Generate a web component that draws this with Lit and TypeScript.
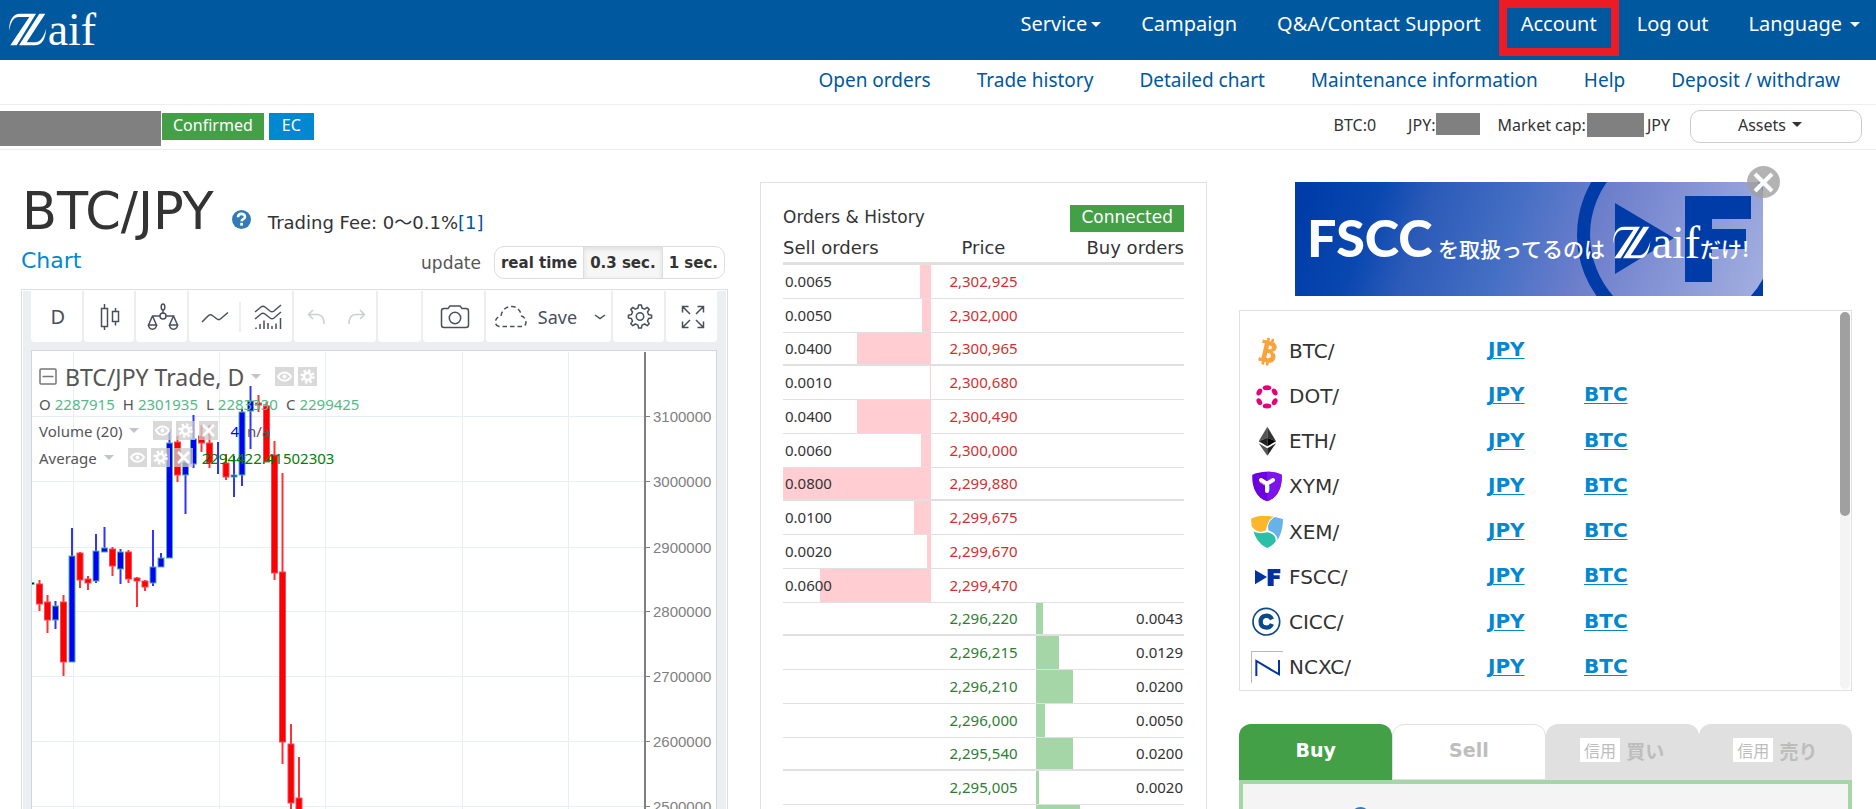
import { LitElement, html, svg, css } from "lit";
import { customElement } from "lit/decorators.js";
import { classMap } from "lit/directives/class-map.js";
import { styleMap } from "lit/directives/style-map.js";

const zMark = svg`
  <path d="M27 92C27 60 38 40 60 40H108L50 135H31L88 50H56C42 50 33 62 27 92Z" />
  <path d="M118 40H136L80 126H105C122 126 132 108 139 84C136 115 128 135 105 135H57Z" />
  <text x="143" y="134" font-size="138" font-family="Liberation Serif, serif">aif</text>`;

const caret = html`<svg class="caret" width="10" height="5" viewBox="0 0 10 5" aria-hidden="true"><path d="M0 0H10L5 5Z" /></svg>`;

const help = html`<svg class="help" width="19" height="19" viewBox="0 0 19 19" aria-hidden="true">
  <circle cx="9.5" cy="9.5" r="9.5" fill="#337ab7" />
  <path d="M6 7.2C6 2.8 13 2.8 13 6.9C13 9.3 9.6 9 9.6 11.3" fill="none" stroke="#fff" stroke-width="2.6" />
  <rect x="8.2" y="12.8" width="2.8" height="2.8" fill="#fff" />
</svg>`;

/* ---------- Price chart ---------- */

type Candle = [x: number, up: boolean, high: number, top: number, bottom: number, low: number];
const candles: Candle[] = [
  [39.5, false, 580, 584, 604, 611], [47.5, false, 595, 602, 620, 633], [55.5, true, 601, 606, 620, 629],
  [63.5, false, 595, 602, 662, 676], [72, true, 528, 556, 662, 662], [80, false, 552, 553, 580, 588],
  [88, false, 576, 579, 583, 590], [96, true, 534, 551, 581, 583], [104.5, true, 527, 548, 552, 552],
  [112.5, false, 547, 549, 566, 576], [120.5, true, 549, 552, 569, 584], [128.5, false, 550, 552, 579, 583],
  [137, false, 577, 578, 581, 607], [145, false, 580, 581, 587, 591], [153, true, 530, 567, 583, 586],
  [161, true, 553, 558, 567, 567], [169.5, true, 429, 443, 558, 558], [177.5, false, 436, 442, 475, 482],
  [185.5, true, 459, 462, 475, 514], [193.5, true, 415, 439, 464, 468], [201.5, false, 425, 436, 443, 452],
  [209.5, false, 425, 443, 463, 468], [218, true, 442, 458, 458, 474], [226, false, 454, 463, 477, 480],
  [234, true, 456, 475, 477, 497], [242, true, 409, 412, 475, 486], [250.5, true, 386, 401, 411, 449],
  [258.5, false, 395, 403, 405, 412], [266.5, false, 402, 406, 462, 462], [274.5, false, 441, 455, 573, 580],
  [282.5, false, 473, 572, 742, 764], [291, false, 724, 744, 803, 830], [299, false, 757, 798, 850, 850],
];
const levels = [
  [416, "3100000"], [481, "3000000"], [547, "2900000"], [611, "2800000"],
  [676, "2700000"], [741, "2600000"], [806, "2500000"],
] as const;

/* ---------- Order book ---------- */

const asks: [string, string, number][] = [
  ["0.0065", "2,302,925", 8], ["0.0050", "2,302,000", 6], ["0.0400", "2,300,965", 50], ["0.0010", "2,300,680", 1],
  ["0.0400", "2,300,490", 50], ["0.0060", "2,300,000", 7], ["0.0800", "2,299,880", 100], ["0.0100", "2,299,675", 12],
  ["0.0020", "2,299,670", 3], ["0.0600", "2,299,470", 75],
];
const bids: [string, string, number][] = [
  ["0.0043", "2,296,220", 5], ["0.0129", "2,296,215", 16], ["0.0200", "2,296,210", 25], ["0.0050", "2,296,000", 6],
  ["0.0200", "2,295,540", 25], ["0.0020", "2,295,005", 2], ["0.0245", "2,295,000", 30],
];

/* ---------- Coin icons, each on a 96-unit square ---------- */

const coins: Record<string, unknown> = {
  BTC: svg`<g transform="rotate(13 50 50)"><path d="M28 18H56C76 18 80 42 64 47C84 52 80 82 57 82H28V72H36V28H28ZM50 31V42H54C62 42 62 31 54 31ZM50 54V69H55C65 69 65 54 55 54Z" fill="#f9a33c" fill-rule="evenodd"/><path d="M44 9V20M57 9V20M44 80V91M57 80V91" stroke="#f9a33c" stroke-width="8"/></g>`,
  DOT: svg`<g fill="#e6007a"><ellipse cx="48" cy="23" rx="13" ry="7.5"/><ellipse cx="48" cy="78" rx="13" ry="7.5"/><ellipse cx="25" cy="36" rx="11" ry="7.5" transform="rotate(-60 25 36)"/><ellipse cx="25" cy="65" rx="11" ry="7.5" transform="rotate(60 25 65)"/><ellipse cx="71" cy="36" rx="11" ry="7.5" transform="rotate(60 71 36)"/><ellipse cx="71" cy="65" rx="11" ry="7.5" transform="rotate(-60 71 65)"/></g>`,
  ETH: svg`<path d="M49 5L23 49L49 38Z" fill="#555"/><path d="M49 5L75 49L49 38Z" fill="#333"/><path d="M23 49L49 38V64Z" fill="#222"/><path d="M75 49L49 38V64Z" fill="#000"/><path d="M23 55L49 70V92Z" fill="#555"/><path d="M75 55L49 70V92Z" fill="#222"/>`,
  XYM: svg`<path d="M48 5C64 5 82 9 92 14C94 45 84 82 48 94C12 82 2 45 4 14C14 9 32 5 48 5Z" fill="#6d00e0"/><path d="M48 5C64 5 82 9 92 14C94 45 84 82 48 94Z" fill="#7d14ea"/><path d="M30 30L48 41L66 30M48 40V63" stroke="#fff" stroke-width="12" stroke-linecap="round" fill="none"/><path d="M26 36L42 46" stroke="#f0b040" stroke-width="3"/><path d="M55 47V62" stroke="#20c0c0" stroke-width="3"/>`,
  XEM: svg`<path d="M0 8C18 -2 44 -2 68 2C50 12 50 28 44 43C28 54 8 42 2 30Z" fill="#fbb62c"/><path d="M72 3C84 6 92 8 96 10C96 32 90 56 80 72C78 52 60 48 52 42C48 26 58 10 72 3Z" fill="#67b2e8"/><path d="M8 46C22 54 38 52 50 49C66 52 76 62 74 76C68 86 58 92 49 96C28 88 12 66 8 46Z" fill="#2cbfa7"/>`,
  FSCC: svg`<g fill="#0033a0"><path d="M12 27L48 48L12 70Z"/><path d="M50 24H88V37H68V43H86V54H68V75H50Z"/></g>`,
  CICC: svg`<circle cx="46" cy="47" r="40" fill="none" stroke="#0b4a8a" stroke-width="5"/><path d="M63 40C56 24 29 26 29 47C29 68 56 70 63 54" fill="none" stroke="#0b4a8a" stroke-width="13"/>`,
  NCXC: svg`<path d="M1 96V1H96" fill="none" stroke="#aaa" stroke-width="3"/><path d="M16 75V30L84 70V27" fill="none" stroke="#0033a0" stroke-width="6"/>`,
};

const gearPath = svg`<path d="M11.6 2H14.4L15 5L17.6 6.1L20.2 4.4L22.2 6.4L20.5 9L21.6 11.6L24.6 12.2V14.9L21.6 15.5L20.5 18.1L22.2 20.7L20.2 22.7L17.6 21L15 22.1L14.4 25H11.6L11 22.1L8.4 21L5.8 22.7L3.8 20.7L5.5 18.1L4.4 15.5L1.4 14.9V12.2L4.4 11.6L5.5 9L3.8 6.4L5.8 4.4L8.4 6.1L11 5Z" stroke-linejoin="round"/>`;

const icon = (w: number, h: number, body: unknown) =>
  html`<svg class="line-icon" width=${w} height=${h} viewBox="0 0 ${w} ${h}" aria-hidden="true">${body}</svg>`;

const eyeTool = html`<button class="mini" aria-label="Hide"><svg width="15" height="13" viewBox="0 0 15 13"><path d="M1 6.5C4 1 11 1 14 6.5C11 12 4 12 1 6.5Z" fill="none" stroke="#fff" stroke-width="2"/><circle cx="7.5" cy="6.5" r="2" fill="#fff"/></svg></button>`;
const gearTool = html`<button class="mini" aria-label="Settings"><svg width="15" height="15" viewBox="0 0 15 15"><circle cx="7.5" cy="7.5" r="3.6" fill="none" stroke="#fff" stroke-width="2.6"/><circle cx="7.5" cy="7.5" r="6" fill="none" stroke="#fff" stroke-width="2.4" stroke-dasharray="2.4 2.3"/></svg></button>`;
const closeTool = html`<button class="mini" aria-label="Remove"><svg width="13" height="13" viewBox="0 0 13 13"><path d="M1 1L12 12M12 1L1 12" stroke="#fff" stroke-width="2.6"/></svg></button>`;

@customElement("price-chart")
export class PriceChart extends LitElement {
  static styles = css`
    :host { display: block; border: 1px solid #dcdee0; padding: 1px 1px 0; font-family: "Noto Sans", sans-serif; color: #4a4f5c; }
    button { font: inherit; color: inherit; border: 0; margin: 0; padding: 0; background: none; }
    .body { background: #ebeff2; padding: 0 9px 0 8px; }
    .toolbar { display: grid; grid-template-columns: 51fr 51fr 51fr 104fr 83fr 43fr 62fr 126fr 52fr 51fr; gap: 2px; height: 51px; }
    .cell { display: flex; align-items: center; justify-content: center; background: #fff; border-radius: 0 0 4px 4px; }
    .cell button { flex: 1; height: 100%; padding-left: 3px; display: flex; align-items: center; justify-content: center; gap: 10px; }
    .interval { font-size: 20px; }
    .save { font-size: 18px; }
    .save svg:last-child { margin-left: 7px; }
    .rule { width: 2px; height: 30px; background: #ebeff2; }
    .faded { color: #ccced2; }
    .line-icon { fill: none; stroke: currentColor; stroke-width: 1.5; display: block; }
    .pane { position: relative; margin-top: 8px; background: #fff; border: 1px solid #d3d6d9; overflow: hidden; }
    .plot { display: block; }
    .legend { position: absolute; inset: 12px auto auto 7px; }
    .line { display: flex; align-items: center; height: 27px; font-size: 15px; color: #555; white-space: nowrap; }
    .title { font-size: 23px; }
    .fold { width: 18px; height: 18px; margin-right: 8px; }
    .fold svg { display: block; }
    .drop { fill: #c4c4c4; margin: 0 14px 0 7px; }
    .mini { width: 19px; height: 19px; margin-right: 4px; background: rgba(204, 204, 204, 0.75); display: flex; align-items: center; justify-content: center; }
    .ohlc { margin-right: 8px; }
    .num { color: #53b987; margin-left: 4px; }
    .vol { color: #0000ff; margin: 0 8px; }
    .avg { color: #008000; margin-left: 5px; }
    .grid { stroke: #e6eff4; stroke-width: 1; }
    .axis { stroke: #808080; stroke-width: 2; }
    .tick { stroke: #808080; stroke-width: 1; }
    .label { fill: #808080; font: 15px "Liberation Sans", sans-serif; }
    .up { fill: #0000ff; stroke: #53b987; }
    .down { fill: #ff0000; stroke: #eb4d5c; }
    .wick-up { stroke: #3333ff; stroke-width: 2; }
    .wick-down { stroke: #ff3333; stroke-width: 2; }
  `;

  render() {
    const drop = html`<svg class="drop" width="10" height="5" viewBox="0 0 10 5"><path d="M0 0H10L5 5Z" /></svg>`;
    return html`<div class="body">
      <div class="toolbar" role="toolbar" aria-label="Chart tools">
        <div class="cell"><button class="interval">D</button></div>
        <div class="cell"><button aria-label="Candles">${icon(20, 28, svg`<rect x="1.5" y="5.5" width="6" height="18"/><path d="M4.5 1V5.5M4.5 23.5V27M15.5 5V8.5M15.5 18.5V22.5"/><rect x="12.5" y="8.5" width="6" height="10"/>`)}</button></div>
        <div class="cell"><button aria-label="Compare">${icon(32, 28, svg`<ellipse cx="16" cy="4" rx="1.8" ry="3"/><path d="M16 7V10.5M13 13H5.5L1.5 22H9.5L5.5 13M19 13H26.5L22.5 22H30.5L26.5 13"/><circle cx="16" cy="13" r="3"/><path d="M1.5 22C2 27.5 9 27.5 9.5 22M22.5 22C23 27.5 30 27.5 30.5 22"/>`)}</button></div>
        <div class="cell">
          <button aria-label="Line style">${icon(28, 12, svg`<path d="M1 11L7 5Q9 2.5 12 5L16 8Q18 9.5 20 7.5L27 1.5"/>`)}</button>
          <span class="rule"></span>
          <button aria-label="Indicators">${icon(28, 26, svg`<path d="M1 8L7 3Q9 1.5 11 3L16 7Q18 8.5 20 7L27 1M1 15L7 10Q9 8.5 11 10L16 14Q18 15.5 20 14L27 8"/><path d="M2 25V23.5M6 25V20M10 25V16.5M14 25V19M18 25V22M22 25V19.5M26.5 25V14"/>`)}</button>
        </div>
        <div class="cell faded">
          <button aria-label="Undo">${icon(18, 16, svg`<path d="M6 1L1.5 5.5L6 10M1.5 5.5H10Q17 5.5 17 15"/>`)}</button>
          <button aria-label="Redo">${icon(18, 16, svg`<path d="M12 1L16.5 5.5L12 10M16.5 5.5H8Q1 5.5 1 15"/>`)}</button>
        </div>
        <div class="cell"></div>
        <div class="cell"><button aria-label="Snapshot">${icon(30, 24, svg`<path d="M4 3.5H8L10 1H20L22 3.5H26Q28.5 3.5 28.5 6V20Q28.5 22.5 26 22.5H4Q1.5 22.5 1.5 20V6Q1.5 3.5 4 3.5Z"/><circle cx="15" cy="13" r="5.7"/>`)}</button></div>
        <div class="cell"><button class="save">${icon(34, 23, svg`<path stroke-dasharray="4.5 3" d="M5 21.5C0 21 0 12 7 11C8 4 13 1.5 18 1.5C24 1.5 27 7 27.5 11C32 12 34 20 29 21.5Z"/>`)}<span>Save</span>${icon(12, 6, svg`<path d="M1 1L6 4.5L11 1"/>`)}</button></div>
        <div class="cell"><button aria-label="Settings">${icon(27, 27, svg`${gearPath}<circle cx="13" cy="13.5" r="3.7"/>`)}</button></div>
        <div class="cell"><button aria-label="Full screen">${icon(24, 24, svg`<path d="M1.5 7.5V1.5H7.5M1.5 1.5L9 9M16.5 1.5H22.5V7.5M22.5 1.5L15 9M1.5 16.5V22.5H7.5M1.5 22.5L9 15M22.5 16.5V22.5H16.5M22.5 22.5L15 15"/>`)}</button></div>
      </div>
      <div class="pane">
        <svg class="plot" width="685" height="500" viewBox="32 351 685 500" role="img" aria-label="BTC/JPY daily candles">
          ${[73.5, 219.5, 325.5, 462.5, 568.5].map((x) => svg`<path class="grid" d="M${x} 352V851" />`)}
          ${levels.map(([y, t]) => svg`<path class="grid" d="M32 ${y + 0.5}H644" /><path class="tick" d="M645 ${y + 0.5}H650" /><text class="label" x="653" y=${y + 6}>${t}</text>`)}
          <rect class="up" x="30" y="582.5" width="4" height="2" />
          ${candles.map(([x, up, high, top, bottom, low]) => svg`
            <path class=${up ? "wick-up" : "wick-down"} d="M${x} ${high}V${low}" />
            <rect class=${up ? "up" : "down"} x=${x - 3} y=${top} width="6" height=${bottom - top} />`)}
          <path class="axis" d="M645 352V851" />
        </svg>
        <div class="legend">
          <div class="line title">
            <button class="fold" aria-label="Collapse legend"><svg width="18" height="17" viewBox="0 0 18 17"><rect x="1" y="1" width="16" height="15" rx="1" fill="none" stroke="#777" stroke-width="1.5" /><path d="M3.5 8.5H14.5" stroke="#777" stroke-width="1.5" /></svg></button>
            <span>BTC/JPY Trade, D</span>${drop}${eyeTool}${gearTool}
          </div>
          <div class="line">
            ${[["O", "2287915"], ["H", "2301935"], ["L", "2283330"], ["C", "2299425"]].map(([k, v]) => html`<span class="ohlc">${k}<span class="num">${v}</span></span>`)}
          </div>
          <div class="line"><span>Volume (20)</span>${drop}${eyeTool}${gearTool}${closeTool}<span class="vol">4</span><span>n/a</span></div>
          <div class="line"><span>Average</span>${drop}${eyeTool}${gearTool}${closeTool}<span class="avg">2294422.41502303</span></div>
        </div>
      </div>
    </div>`;
  }
}

@customElement("order-book")
export class OrderBook extends LitElement {
  static styles = css`
    :host { display: block; border: 1px solid #e0e0e0; padding: 22px 22px 0; font-family: "DejaVu Sans", sans-serif; font-size: 17px; color: #333; }
    .head { display: flex; justify-content: space-between; align-items: flex-start; line-height: 25px; }
    .badge { background: #43a047; color: #fff; padding: 0 11px; height: 27px; }
    table { width: 100%; table-layout: fixed; border-collapse: separate; border-spacing: 0; }
    .side { width: 37%; }
    th { font-weight: 400; height: 33px; padding: 2px 0 0; border-bottom: 3px solid #e0e0e0; font-size: 18px; line-height: 22px; box-sizing: border-box; }
    .left { text-align: left; }
    .right { text-align: right; }
    td { position: relative; height: 34px; padding: 0 2px 2px; box-sizing: border-box; border-bottom: 1px solid #e0e0e0; font: 15px/20px "Noto Sans", sans-serif; text-align: center; }
    tr:nth-child(4n + 3) td { height: 33px; border-bottom-width: 2px; }
    td.left { text-align: left; }
    td.right { text-align: right; padding-right: 1px; }
    .ask { color: #d32f2f; }
    .bid { color: #2e7d32; }
    .bar { position: absolute; top: 0; bottom: 0; }
    .ask-bar { right: 0; background: #ffcdd2; }
    .bid-bar { left: 0; background: #a5d6a7; }
    .amount { position: relative; }
  `;

  render() {
    return html`
      <div class="head"><span>Orders &amp; History</span><span class="badge">Connected</span></div>
      <table>
        <colgroup><col class="side" /><col /><col class="side" /></colgroup>
        <thead><tr><th class="left">Sell orders</th><th>Price</th><th class="right">Buy orders</th></tr></thead>
        <tbody>
          ${asks.map(([a, p, w]) => html`<tr>
            <td class="left"><span class="bar ask-bar" style=${styleMap({ width: `${w}%` })}></span><span class="amount">${a}</span></td>
            <td class="ask">${p}</td><td></td></tr>`)}
          ${bids.map(([a, p, w]) => html`<tr>
            <td></td><td class="bid">${p}</td>
            <td class="right"><span class="bar bid-bar" style=${styleMap({ width: `${w}%` })}></span><span class="amount">${a}</span></td></tr>`)}
        </tbody>
      </table>`;
  }
}

@customElement("app-root")
export class AppRoot extends LitElement {
  static styles = css`
    :host { display: block; height: 100vh; overflow: hidden; background: #fff; color: #333; font-family: "DejaVu Sans", "Noto Sans CJK JP", sans-serif; font-size: 17px; }
    a { text-decoration: none; color: #00589f; }
    button { font: inherit; color: inherit; margin: 0; padding: 0; border: 0; background: none; }
    .caret { fill: currentColor; }
    .top { display: flex; justify-content: space-between; background: #00589f; height: 60px; padding: 0 16px 0 8px; font: 20px/26px "Noto Sans", sans-serif; }
    .logo { fill: #fff; margin-top: 11px; overflow: visible; }
    .menu { display: flex; align-items: flex-start; }
    .menu a, .menu button { color: #fff; margin-left: 40px; padding-top: 11px; display: flex; align-items: center; gap: 4px; white-space: nowrap; }
    .menu .lang { gap: 8px; }
    .menu .marked { box-sizing: border-box; border: 8px solid #ed1c24; height: 56px; padding: 0 14px 8px; margin: 0 -22px 0 18px; }
    .sub { display: flex; justify-content: flex-end; gap: 46px; height: 44px; padding-right: 36px; border-bottom: 1px solid #eee; font: 19px/40px "Noto Sans", sans-serif; }
    .status { display: flex; align-items: flex-start; height: 44px; border-bottom: 1px solid #eee; font: 16px/24px "Noto Sans", sans-serif; padding-right: 14px; }
    .mask { background: #808080; }
    .user { width: 161px; height: 35px; margin: 6px 1px 0 0; }
    .tag { color: #fff; background: #43a047; height: 27px; margin: 8px 5px 0 0; padding: 0 11px; }
    .ec { background: #0288d1; padding: 0 13px; }
    .stats { margin-left: auto; display: flex; align-items: flex-start; gap: 18px; padding-top: 8px; }
    .stat { display: flex; }
    .stat:first-child { margin-right: 14px; }
    .balance { width: 44px; height: 22px; }
    .cap { width: 57px; height: 24px; margin: 0 3px 0 1px; }
    .assets { width: 172px; height: 33px; margin: 5px 0 0 20px; border: 1px solid #ccc; border-radius: 10px; display: flex; align-items: center; justify-content: center; gap: 6px; padding: 0 12px 4px 0; }
    .main { display: grid; grid-template-columns: minmax(0, 707fr) minmax(0, 447fr) minmax(0, 613fr); column-gap: 32px; padding: 32px 24px 0 21px; align-items: start; }
    .pair { display: flex; align-items: baseline; height: 62px; padding-left: 1px; font-size: 18px; }
    h1 { font-size: 51px; line-height: 60px; font-weight: 400; margin: 0 18px 0 0; }
    .help { display: block; align-self: flex-end; }
    .pair .help { margin: 0 17px 15px 0; }
    .bar { display: flex; align-items: center; height: 33px; margin: 2px 3px 10px 0; }
    h2 { font-size: 22px; font-weight: 400; color: #0288d1; margin: 0 auto 0 0; line-height: 30px; padding-bottom: 3px; }
    .update { margin-right: 13px; color: #555; }
    .rates { display: flex; border: 1px solid #ddd; border-radius: 10px; font-size: 15px; font-weight: 700; height: 31px; overflow: hidden; }
    .rates button { padding: 0 6px; border-left: 1px solid #ddd; }
    .rates button:first-child { border-left: 0; }
    .rates .on { background: #f6f6f6; box-shadow: inset 0 2px 5px #ddd; }
    .promo { position: relative; width: 468px; margin: 0 0 14px 56px; }
    .promo svg { display: block; overflow: visible; }
    .promo-close { position: absolute; right: -17px; top: -16px; width: 33px; height: 32px; border-radius: 50%; background: rgba(160, 160, 160, 0.8); display: flex; align-items: center; justify-content: center; }
    .list { border: 1px solid #e0e0e0; height: 379px; display: flex; justify-content: space-between; overflow: hidden; }
    table { border-spacing: 0; margin: 17px 0 0 11px; font-size: 20px; }
    td { height: 45px; padding: 0; }
    td:nth-child(1) { width: 38px; }
    td:nth-child(2) { width: 199px; }
    td:nth-child(3) { width: 96px; }
    td svg { display: block; }
    td a { display: block; padding-bottom: 3px; color: #0288d1; font-weight: 700; text-decoration: underline; text-underline-offset: 2px; text-decoration-thickness: 1px; }
    .track { width: 10px; margin: 1px; border-radius: 5px; background: #f4f4f4; }
    .thumb { height: 204px; border-radius: 5px; background: #a0a0a0; }
    .tabs { display: grid; grid-template-columns: repeat(4, 1fr); margin-top: 33px; font-size: 19px; font-weight: 700; color: #bdbdbd; }
    .tab { height: 56px; border-radius: 12px 12px 0 0; background: #e0e0e0; display: flex; align-items: center; justify-content: center; gap: 6px; padding-bottom: 4px; }
    .buy { background: #43a047; color: #fff; }
    .sell { background: #fff; border: 1px solid #e0e0e0; }
    .margin { font: 16px/24px "Noto Sans CJK JP", sans-serif; background: #fff; padding: 0 4px; }
    .order { border: 4px solid #a5d6a7; background: #f4f4f4; padding: 23px 0 0 108px; height: 60px; }
  `;

  render() {
    return html`
      <header class="top">
        <svg class="logo" width="89" height="36" viewBox="24 32 267 108" role="img" aria-label="Zaif">${zMark}</svg>
        <nav class="menu">
          <button>Service${caret}</button>
          <a href="#">Campaign</a>
          <a href="#">Q&amp;A/Contact Support</a>
          <a href="#" class="marked">Account</a>
          <a href="#">Log out</a>
          <button class="lang">Language${caret}</button>
        </nav>
      </header>
      <nav class="sub">
        ${["Open orders", "Trade history", "Detailed chart", "Maintenance information", "Help", "Deposit / withdraw"].map((t) => html`<a href="#">${t}</a>`)}
      </nav>
      <div class="status">
        <span class="mask user"></span><span class="tag">Confirmed</span><span class="tag ec">EC</span>
        <div class="stats">
          <span class="stat">BTC:0</span>
          <span class="stat">JPY:<span class="mask balance"></span></span>
          <span class="stat">Market cap:<span class="mask cap"></span>JPY</span>
        </div>
        <button class="assets">Assets ${caret}</button>
      </div>
      <main class="main">
        <section>
          <div class="pair"><h1>BTC/JPY</h1>${help}<span>Trading Fee: 0〜0.1%<a href="#">[1]</a></span></div>
          <div class="bar">
            <h2>Chart</h2><span class="update">update</span>
            <div class="rates">${["real time", "0.3 sec.", "1 sec."].map((t, i) => html`<button class=${classMap({ on: i === 1 })} aria-pressed=${i === 1}>${t}</button>`)}</div>
          </div>
          <price-chart></price-chart>
        </section>
        <order-book></order-book>
        <section>
          <div class="promo">
            <svg width="468" height="114" viewBox="1295 182 468 114" role="img">
              <defs>
                <linearGradient id="sky" x1="1310" y1="190" x2="1763" y2="350" gradientUnits="userSpaceOnUse">
                  <stop offset="0" stop-color="#003ca8" /><stop offset="0.14" stop-color="#0a48b0" /><stop offset="0.24" stop-color="#2b5ab8" /><stop offset="0.42" stop-color="#456fc4" /><stop offset="0.6" stop-color="#6f80cc" /><stop offset="1" stop-color="#a8b4e2" />
                </linearGradient>
                <clipPath id="frame"><rect x="1295" y="182" width="468" height="114" /></clipPath>
              </defs>
              <rect x="1295" y="182" width="468" height="114" fill="url(#sky)" />
              <g fill="#003ca8" clip-path="url(#frame)">
                <circle cx="1682" cy="235" r="98.5" fill="none" stroke="#003ca8" stroke-width="13" />
                <path d="M1615 203L1674 238L1615 274Z" />
                <path d="M1685 196H1751V219H1712V229H1746V249H1712V282H1685Z" />
              </g>
              <g fill="#fff">
                <text x="1307" y="257" font-size="52" font-weight="900" font-family="Lato, sans-serif">FSCC</text>
                <text x="1438" y="257" font-size="21" font-weight="500" font-family="Noto Sans CJK JP, sans-serif">を取扱ってるのは</text>
                <svg x="1611" y="224" width="91" height="36" viewBox="24 32 267 108">${zMark}</svg>
                <text x="1700" y="257" font-size="21" font-weight="500" font-family="Noto Sans CJK JP, sans-serif">だけ!</text>
              </g>
            </svg>
            <button class="promo-close" aria-label="Close"><svg width="19" height="19" viewBox="0 0 19 19"><path d="M1 1L18 18M18 1L1 18" stroke="#fff" stroke-width="4" /></svg></button>
          </div>
          <div class="list">
            <table>
              ${Object.keys(coins).map((c) => html`<tr>
                <td><svg width="32" height="32" viewBox="0 0 96 96" aria-hidden="true">${coins[c]}</svg></td>
                <td>${c}/</td><td><a href="#">JPY</a></td><td>${c === "BTC" ? "" : html`<a href="#">BTC</a>`}</td></tr>`)}
            </table>
            <div class="track"><div class="thumb"></div></div>
          </div>
          <div class="tabs" role="tablist">
            <button class="tab buy" role="tab" aria-selected="true">Buy</button>
            <button class="tab sell" role="tab">Sell</button>
            <button class="tab" role="tab"><span class="margin">信用</span>買い</button>
            <button class="tab" role="tab"><span class="margin">信用</span>売り</button>
          </div>
          <div class="order">${help}</div>
        </section>
      </main>`;
  }
}
